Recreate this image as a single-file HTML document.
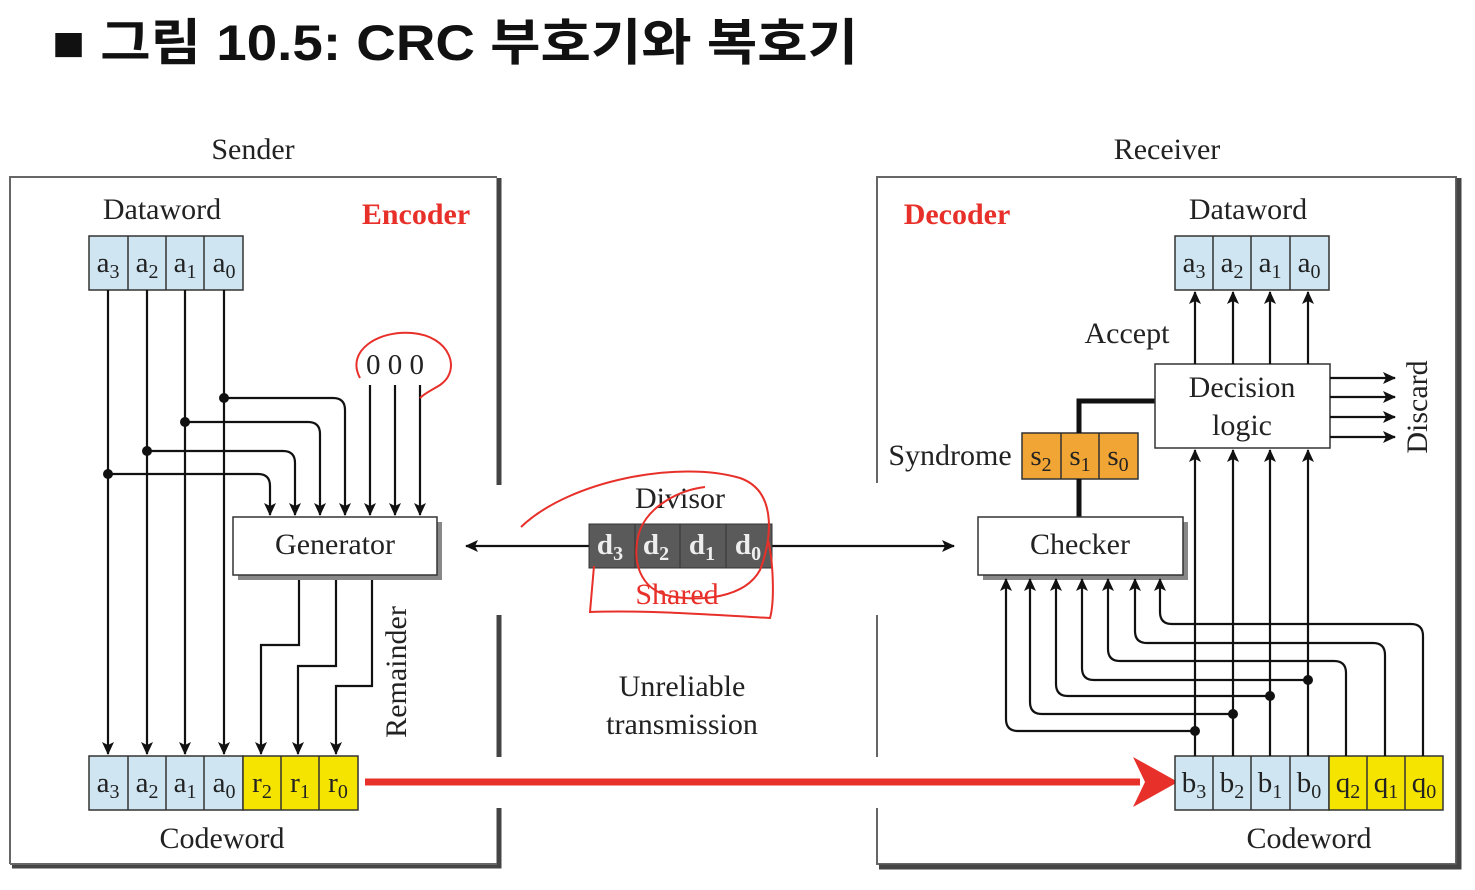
<!DOCTYPE html>
<html><head><meta charset="utf-8"><style>
html,body{margin:0;padding:0;background:#fff;}
svg{display:block;}
text{font-family:"Liberation Serif",serif;fill:#222;}
.c{font-size:30px;text-anchor:middle;}
.v{font-size:29px;text-anchor:middle;}
</style></head><body>
<svg width="1475" height="890" viewBox="0 0 1475 890" xmlns="http://www.w3.org/2000/svg">
<defs>
<marker id="ah" markerWidth="14" markerHeight="14" refX="12" refY="7" orient="auto" markerUnits="userSpaceOnUse">
<path d="M0,1 L13,7 L0,13 L3,7 Z" fill="#111"/></marker>
</defs>
<rect width="1475" height="890" fill="#fff"/>
<text x="52" y="60" textLength="806" lengthAdjust="spacingAndGlyphs" style="font-family:'Liberation Sans','Noto Sans CJK KR',sans-serif;font-weight:bold;font-size:50px;fill:#111">■ 그림 10.5: CRC 부호기와 복호기</text>
<text x="253" y="159" class="c">Sender</text>
<text x="1167" y="159" class="c">Receiver</text>

<g stroke="#666" stroke-width="2" fill="none">
<path d="M10,864 L10,177 L497,177"/>
<path d="M877,483 L877,177 L1456,177 L1456,864 L877,864 L877,808"/>
<path d="M877,615 L877,757"/>
</g>
<g stroke="#444" stroke-width="5" fill="none">
<path d="M499,178 L499,485 M499,615 L499,757 M499,808 L499,866 L12,866"/>
<path d="M1459,178 L1459,867 L879,867"/>
</g>
<path d="M10,864 L497,864" stroke="#666" stroke-width="2"/>

<!-- LEFT -->
<text x="162" y="219" class="c">Dataword</text>
<text x="416" y="224" class="c" style="fill:#e8302a;font-weight:bold">Encoder</text>
<g stroke="#333" stroke-width="1.5" fill="#cfe6f2">
<rect x="89" y="236" width="154" height="54"/>
<path d="M128,236V290M166,236V290M204,236V290"/>
<rect x="89" y="756" width="154" height="54"/>
<rect x="243" y="756" width="115" height="54" fill="#f5e400"/>
<path d="M128,756V810M166,756V810M204,756V810M281,756V810M319,756V810"/>
</g>
<text x="108" y="272" class="v">a<tspan font-size="20" dy="6">3</tspan></text>
<text x="147" y="272" class="v">a<tspan font-size="20" dy="6">2</tspan></text>
<text x="185" y="272" class="v">a<tspan font-size="20" dy="6">1</tspan></text>
<text x="224" y="272" class="v">a<tspan font-size="20" dy="6">0</tspan></text>
<text x="108" y="792" class="v">a<tspan font-size="20" dy="6">3</tspan></text>
<text x="147" y="792" class="v">a<tspan font-size="20" dy="6">2</tspan></text>
<text x="185" y="792" class="v">a<tspan font-size="20" dy="6">1</tspan></text>
<text x="224" y="792" class="v">a<tspan font-size="20" dy="6">0</tspan></text>
<text x="262" y="792" class="v">r<tspan font-size="20" dy="6">2</tspan></text>
<text x="300" y="792" class="v">r<tspan font-size="20" dy="6">1</tspan></text>
<text x="338" y="792" class="v">r<tspan font-size="20" dy="6">0</tspan></text>
<text x="222" y="848" class="c">Codeword</text>
<g stroke="#111" stroke-width="2.2" fill="none" marker-end="url(#ah)">
<path d="M108,290V754"/><path d="M147,290V754"/><path d="M185,290V754"/><path d="M224,290V754"/>
<path d="M224,398H333Q345,398 345,410V515"/>
<path d="M185,422H308Q320,422 320,434V515"/>
<path d="M147,451H283Q295,451 295,463V515"/>
<path d="M108,474H258Q270,474 270,486V515"/>
<path d="M370,385V515"/><path d="M395,385V515"/><path d="M420,385V515"/>
<path d="M299,577V645H261V754"/>
<path d="M336,577V666H298V754"/>
<path d="M372,577V686H336V754"/>
</g>
<g fill="#111"><circle cx="224" cy="398" r="5"/><circle cx="185" cy="422" r="5"/><circle cx="147" cy="451" r="5"/><circle cx="108" cy="474" r="5"/></g>
<text x="395" y="374" class="v">0 0 0</text>
<path d="M360,378 C345,350 380,330 412,333 C450,336 462,370 440,385 C432,390 425,393 420,398" stroke="#e8302a" stroke-width="2" fill="none"/>
<rect x="238" y="522" width="204" height="58" fill="#888"/>
<rect x="233" y="517" width="204" height="58" fill="#fff" stroke="#333" stroke-width="1.5"/>
<text x="335" y="554" class="c">Generator</text>
<text transform="translate(406,672) rotate(-90)" class="c">Remainder</text>

<!-- CENTER -->
<path d="M589,546H466" stroke="#111" stroke-width="2.2" marker-end="url(#ah)"/>
<path d="M772,546H954" stroke="#111" stroke-width="2.2" marker-end="url(#ah)"/>
<text x="680" y="508" class="c">Divisor</text>
<rect x="589" y="524" width="183" height="44" fill="#5a5a5a" stroke="#333"/>
<path d="M635,524V568M680,524V568M726,524V568" stroke="#333"/>
<g style="font-weight:bold">
<text x="610" y="554" class="v" style="fill:#eee">d<tspan font-size="20" dy="6">3</tspan></text>
<text x="656" y="554" class="v" style="fill:#eee">d<tspan font-size="20" dy="6">2</tspan></text>
<text x="702" y="554" class="v" style="fill:#eee">d<tspan font-size="20" dy="6">1</tspan></text>
<text x="748" y="554" class="v" style="fill:#eee">d<tspan font-size="20" dy="6">0</tspan></text>
</g>
<text x="677" y="604" class="c" style="fill:#e8302a">Shared</text>
<g stroke="#e8302a" stroke-width="2" fill="none">
<path d="M521,527 C570,480 680,460 740,478 C780,492 770,545 760,570 C745,598 700,602 670,596 C640,590 630,560 640,530 C650,505 680,490 705,487"/>
<path d="M594,566 L590,612 C640,610 700,614 770,618 C775,600 773,560 768,540"/>
</g>
<text x="682" y="696" class="c">Unreliable</text>
<text x="682" y="734" class="c">transmission</text>
<path d="M365,782H1140" stroke="#e8302a" stroke-width="7"/>
<path d="M1133,757 L1178,782 L1133,807 L1145,782 Z" fill="#e8302a"/>

<!-- RIGHT -->
<text x="957" y="224" class="c" style="fill:#e8302a;font-weight:bold">Decoder</text>
<text x="1248" y="219" class="c">Dataword</text>
<g stroke="#333" stroke-width="1.5" fill="#cfe6f2">
<rect x="1175" y="236" width="154" height="54"/>
<path d="M1213,236V290M1251,236V290M1290,236V290"/>
<rect x="1175" y="756" width="154" height="54"/>
<rect x="1329" y="756" width="114" height="54" fill="#f5e400"/>
<path d="M1213,756V810M1251,756V810M1290,756V810M1367,756V810M1405,756V810"/>
<rect x="1022" y="433" width="116" height="46" fill="#f0a535"/>
<path d="M1061,433V479M1099,433V479"/>
</g>
<text x="1194" y="272" class="v">a<tspan font-size="20" dy="6">3</tspan></text>
<text x="1232" y="272" class="v">a<tspan font-size="20" dy="6">2</tspan></text>
<text x="1270" y="272" class="v">a<tspan font-size="20" dy="6">1</tspan></text>
<text x="1309" y="272" class="v">a<tspan font-size="20" dy="6">0</tspan></text>
<text x="1194" y="792" class="v">b<tspan font-size="20" dy="6">3</tspan></text>
<text x="1232" y="792" class="v">b<tspan font-size="20" dy="6">2</tspan></text>
<text x="1270" y="792" class="v">b<tspan font-size="20" dy="6">1</tspan></text>
<text x="1309" y="792" class="v">b<tspan font-size="20" dy="6">0</tspan></text>
<text x="1348" y="792" class="v">q<tspan font-size="20" dy="6">2</tspan></text>
<text x="1386" y="792" class="v">q<tspan font-size="20" dy="6">1</tspan></text>
<text x="1424" y="792" class="v">q<tspan font-size="20" dy="6">0</tspan></text>
<text x="1041" y="465" class="v">s<tspan font-size="20" dy="6">2</tspan></text>
<text x="1080" y="465" class="v">s<tspan font-size="20" dy="6">1</tspan></text>
<text x="1118" y="465" class="v">s<tspan font-size="20" dy="6">0</tspan></text>
<text x="1309" y="848" class="c">Codeword</text>
<text x="950" y="465" class="c">Syndrome</text>
<text x="1127" y="343" class="c">Accept</text>
<path d="M1079,433V401H1155M1079,479V517" stroke="#111" stroke-width="5" fill="none"/>
<rect x="1155" y="364" width="175" height="84" fill="#fff" stroke="#333" stroke-width="1.5"/>
<text x="1242" y="397" class="c">Decision</text>
<text x="1242" y="435" class="c">logic</text>
<text transform="translate(1427,407) rotate(-90)" class="c">Discard</text>
<rect x="983" y="522" width="205" height="58" fill="#888"/>
<rect x="978" y="517" width="205" height="58" fill="#fff" stroke="#333" stroke-width="1.5"/>
<text x="1080" y="554" class="c">Checker</text>
<g stroke="#111" stroke-width="2.2" fill="none" marker-end="url(#ah)">
<path d="M1195,364V292"/><path d="M1233,364V292"/><path d="M1270,364V292"/><path d="M1308,364V292"/>
<path d="M1330,378H1395"/><path d="M1330,397H1395"/><path d="M1330,417H1395"/><path d="M1330,437H1395"/>
<path d="M1195,756V450"/><path d="M1233,756V450"/><path d="M1270,756V450"/><path d="M1308,756V450"/>
<path d="M1195,731H1018Q1006,731 1006,719V579"/>
<path d="M1233,714H1042Q1030,714 1030,702V579"/>
<path d="M1270,696H1068Q1056,696 1056,684V579"/>
<path d="M1308,680H1094Q1082,680 1082,668V579"/>
<path d="M1346,756V673Q1346,661 1334,661H1120Q1108,661 1108,649V579"/>
<path d="M1385,756V655Q1385,643 1373,643H1147Q1135,643 1135,631V579"/>
<path d="M1423,756V636Q1423,624 1411,624H1172Q1160,624 1160,612V579"/>
</g>
<g fill="#111"><circle cx="1195" cy="731" r="5"/><circle cx="1233" cy="714" r="5"/><circle cx="1270" cy="696" r="5"/><circle cx="1308" cy="680" r="5"/></g>
</svg>
</body></html>
